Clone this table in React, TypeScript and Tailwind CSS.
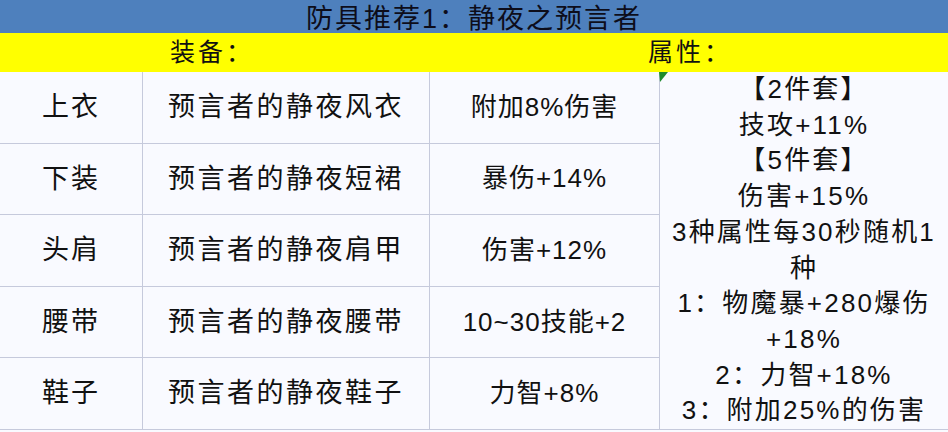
const rows = [
  { slot: "上衣", name: "预言者的静夜风衣", attr: "附加8%伤害" },
  { slot: "下装", name: "预言者的静夜短裙", attr: "暴伤+14%" },
  { slot: "头肩", name: "预言者的静夜肩甲", attr: "伤害+12%" },
  { slot: "腰带", name: "预言者的静夜腰带", attr: "10~30技能+2" },
  { slot: "鞋子", name: "预言者的静夜鞋子", attr: "力智+8%" },
];

const setLines = [
  "【2件套】",
  "技攻+11%",
  "【5件套】",
  "伤害+15%",
  "3种属性每30秒随机1",
  "种",
  "1：物魔暴+280爆伤",
  "+18%",
  "2：力智+18%",
  "3：附加25%的伤害",
];

const font = "font-['Liberation_Sans','Noto_Sans_CJK_SC',sans-serif]";

export default function App() {
  return (
    <div className={`h-[432px] w-[948px] overflow-hidden bg-[#f9faff] text-[#111] ${font}`}>
      <div className="flex h-[33px] items-end justify-center bg-[#4e80bd] text-[27px] leading-none tracking-[2px] text-[#0d0d1a]">
        防具推荐1：静夜之预言者
      </div>

      <div className="grid h-[39px] grid-cols-[648px_1fr] items-center bg-[#ffff00] text-[25px] leading-none tracking-[3px]">
        <span className="pl-[170px]">装备：</span>
        <span>属性：</span>
      </div>

      <div className="grid h-[358px] grid-cols-[143px_287px_230px_1fr] grid-rows-5">
        {rows.map((r) => (
          <div key={r.slot} className="contents">
            <div className="flex items-center justify-center border-r border-b border-[#c6cadc] text-[27px] tracking-[2px]">
              {r.slot}
            </div>
            <div className="flex items-center justify-center border-r border-b border-[#c6cadc] text-[27px] tracking-[2.5px]">
              {r.name}
            </div>
            <div className="flex items-center justify-center border-r border-b border-[#c6cadc] text-[26px] tracking-[1px]">
              {r.attr}
            </div>
          </div>
        ))}
        <div className="relative col-start-4 row-span-5 row-start-1 flex flex-col items-center justify-center border-b border-[#c6cadc] text-[26px] leading-[35.7px] tracking-[2.2px]">
          <svg className="absolute top-0 -left-px" width="9" height="10" viewBox="0 0 9 10">
            <polygon points="0,0 9,0 1,10" fill="#1f8a2e" />
          </svg>
          {setLines.map((l, i) => (
            <span key={i} className="whitespace-nowrap">{l}</span>
          ))}
        </div>
      </div>
    </div>
  );
}
